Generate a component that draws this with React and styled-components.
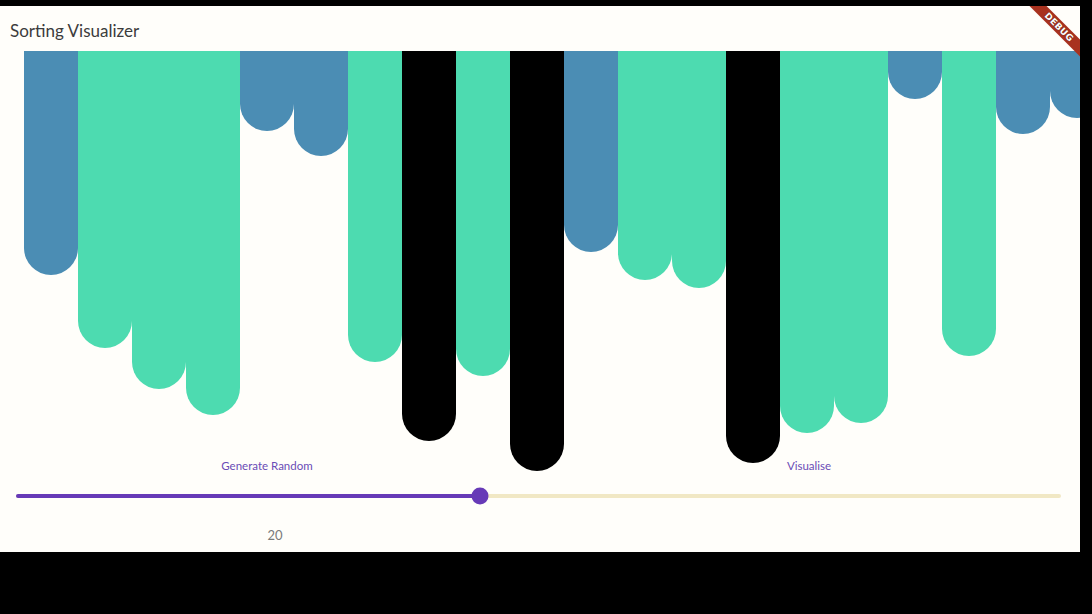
import React from 'react';
import styled, { createGlobalStyle } from 'styled-components';

const GlobalStyle = createGlobalStyle`
  html, body {
    margin: 0;
    padding: 0;
    background: #000000;
  }
  body {
    font-family: 'Lato', 'Noto Sans', sans-serif;
  }
`;

const Screen = styled.div`
  padding-top: 6px;
  width: 1092px;
  height: 608px;
`;

const AppFrame = styled.div`
  position: relative;
  width: 1080px;
  height: 546px;
  background: #fffefa;
  overflow: hidden;
  display: flex;
  flex-direction: column;
`;

const AppBar = styled.header`
  height: 45px;
  display: flex;
  align-items: center;
  padding: 0 10px;
  flex-shrink: 0;
`;

const Title = styled.h1`
  margin: 0;
  font-size: 17px;
  font-weight: 400;
  color: #3c3c3c;
  padding-top: 4px;
`;

const Chart = styled.div`
  height: 396px;
  flex-shrink: 0;
  display: flex;
  align-items: flex-start;
  padding-left: 24px;
`;

const barColors = {
  idle: '#4b8db4',
  sorted: '#4ddbb0',
  active: '#000000',
};

const Bar = styled.div`
  width: 54px;
  flex-shrink: 0;
  height: ${(p) => p.$height}px;
  background: ${(p) => barColors[p.$state]};
  border-radius: 0 0 27px 27px;
`;

const Controls = styled.div`
  height: 36px;
  display: grid;
  grid-template-columns: 1fr 1fr;
  align-items: center;
  flex-shrink: 0;
`;

const TextButton = styled.button`
  justify-self: center;
  background: none;
  border: none;
  padding: 0 8px;
  margin: 0;
  font-family: 'Lato', 'Noto Sans', sans-serif;
  font-size: 11.5px;
  color: #6a4cb6;
  cursor: pointer;
  margin-left: ${(p) => p.$shift || 0}px;
`;

const SliderRow = styled.div`
  height: 24px;
  display: flex;
  align-items: center;
  padding: 1px 19px 0 16px;
  flex-shrink: 0;
`;

const Track = styled.div`
  position: relative;
  flex: 1;
  height: 4px;
  border-radius: 2px;
  background: #f1e8c4;
`;

const ActiveTrack = styled.div`
  height: 4px;
  border-radius: 2px;
  background: #673ab7;
  width: ${(p) => p.$percent}%;
`;

const Thumb = styled.div`
  position: absolute;
  top: 50%;
  left: ${(p) => p.$percent}%;
  width: 17px;
  height: 17px;
  border-radius: 50%;
  background: #673ab7;
  transform: translate(-50%, -50%);
`;

const ValueRow = styled.div`
  display: grid;
  grid-template-columns: 1fr 1fr;
  padding-top: 19px;
`;

const ValueLabel = styled.span`
  justify-self: center;
  margin-left: 10px;
  font-size: 13px;
  color: #7a7a7a;
`;

const DebugBanner = styled.div`
  position: absolute;
  top: 15px;
  right: -17px;
  width: 76px;
  height: 12px;
  background: #a8321f;
  transform: rotate(45deg);
  display: flex;
  align-items: center;
  justify-content: center;
  color: #ffffff;
  font-family: 'DejaVu Sans', sans-serif;
  font-weight: 700;
  font-size: 9px;
  letter-spacing: 0.3px;
  text-shadow: 0 0 1px rgba(0, 0, 0, 0.6);
`;

const bars = [
  { h: 224, s: 'idle' },
  { h: 297, s: 'sorted' },
  { h: 338, s: 'sorted' },
  { h: 364, s: 'sorted' },
  { h: 80, s: 'idle' },
  { h: 105, s: 'idle' },
  { h: 311, s: 'sorted' },
  { h: 390, s: 'active' },
  { h: 325, s: 'sorted' },
  { h: 420, s: 'active' },
  { h: 201, s: 'idle' },
  { h: 229, s: 'sorted' },
  { h: 237, s: 'sorted' },
  { h: 412, s: 'active' },
  { h: 382, s: 'sorted' },
  { h: 372, s: 'sorted' },
  { h: 48, s: 'idle' },
  { h: 305, s: 'sorted' },
  { h: 83, s: 'idle' },
  { h: 67, s: 'idle' },
];

const sliderPercent = 44.4;

const App = () => {
  return (
    <Screen>
      <GlobalStyle />
      <AppFrame>
        <AppBar>
          <Title>Sorting Visualizer</Title>
        </AppBar>
        <Chart>
          {bars.map((b, i) => (
            <Bar key={i} $height={b.h} $state={b.s} />
          ))}
        </Chart>
        <Controls>
          <TextButton $shift={-6}>Generate Random</TextButton>
          <TextButton $shift={-2}>Visualise</TextButton>
        </Controls>
        <SliderRow>
          <Track>
            <ActiveTrack $percent={sliderPercent} />
            <Thumb $percent={sliderPercent} />
          </Track>
        </SliderRow>
        <ValueRow>
          <ValueLabel>20</ValueLabel>
        </ValueRow>
        <DebugBanner>DEBUG</DebugBanner>
      </AppFrame>
    </Screen>
  );
};

export default App;
